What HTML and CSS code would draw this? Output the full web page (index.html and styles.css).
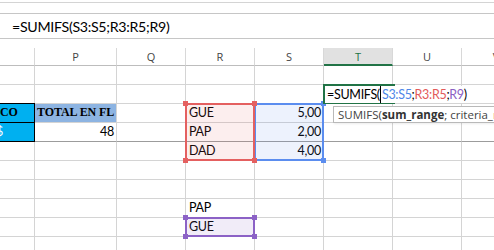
FILE: index.html
```html
<!DOCTYPE html>
<html>
  <head>
    <meta charset="UTF-8" />
    <title>SUMIFS</title>
    <link rel="stylesheet" href="styles.css">
  </head>
  <body>
    <div class="ribbon-edge"></div>
    <div class="formula-bar">
      <span class="formula-text">=SUMIFS(S3:S5;R3:R5;R9)</span>
    </div>

    <div class="sheet">
      <div class="grid">
        <!-- column headers -->
        <div class="hd"></div>
        <div class="hd">P</div>
        <div class="hd">Q</div>
        <div class="hd">R</div>
        <div class="hd">S</div>
        <div class="hd hd-active">T</div>
        <div class="hd">U</div>
        <div class="hd">V</div>

        <!-- row 1 -->
        <div class="c"></div><div class="c"></div><div class="c"></div><div class="c"></div>
        <div class="c"></div><div class="c"></div><div class="c"></div><div class="c"></div>

        <!-- row 2 -->
        <div class="c"></div><div class="c"></div><div class="c"></div><div class="c"></div>
        <div class="c"></div><div class="c"></div><div class="c"></div><div class="c"></div>

        <!-- row 3 -->
        <div class="c c-cyan c-head-o">CO</div>
        <div class="c c-total">TOTAL EN FL</div>
        <div class="c"></div>
        <div class="c">GUE</div>
        <div class="c num">5,00</div>
        <div class="c"></div><div class="c"></div><div class="c"></div>

        <!-- row 4 -->
        <div class="c c-cyan freeze-dark"><span class="cut">$</span></div>
        <div class="c num freeze">48</div>
        <div class="c freeze"></div>
        <div class="c freeze">PAP</div>
        <div class="c num freeze">2,00</div>
        <div class="c freeze"></div><div class="c freeze"></div><div class="c freeze"></div>

        <!-- row 5 -->
        <div class="c"></div><div class="c"></div><div class="c"></div>
        <div class="c">DAD</div>
        <div class="c num">4,00</div>
        <div class="c"></div><div class="c"></div><div class="c"></div>

        <!-- rows 6, 7 -->
        <div class="c"></div><div class="c"></div><div class="c"></div><div class="c"></div>
        <div class="c"></div><div class="c"></div><div class="c"></div><div class="c"></div>
        <div class="c"></div><div class="c"></div><div class="c"></div><div class="c"></div>
        <div class="c"></div><div class="c"></div><div class="c"></div><div class="c"></div>

        <!-- row 8 -->
        <div class="c"></div><div class="c"></div><div class="c"></div>
        <div class="c">PAP</div>
        <div class="c"></div><div class="c"></div><div class="c"></div><div class="c"></div>

        <!-- row 9 -->
        <div class="c"></div><div class="c"></div><div class="c"></div>
        <div class="c">GUE</div>
        <div class="c"></div><div class="c"></div><div class="c"></div><div class="c"></div>

        <!-- row 10 -->
        <div class="c"></div><div class="c"></div><div class="c"></div><div class="c"></div>
        <div class="c"></div><div class="c"></div><div class="c"></div><div class="c"></div>
      </div>

      <!-- highlights drawn over the cells, same tracks as the grid -->
      <div class="grid overlay">
        <div class="range range-blue"><i class="h tl"></i><i class="h tr"></i><i class="h bl"></i><i class="h br"></i></div>
        <div class="range range-red"><i class="h tl"></i><i class="h tr"></i><i class="h bl"></i><i class="h br"></i></div>
        <div class="range range-purple"><i class="h tl"></i><i class="h tr"></i><i class="h bl"></i><i class="h br"></i></div>
        <div class="active-cell">
          <div class="editor">=SUMIFS(<span class="caret"></span><span class="ref-blue">S3:S5</span>;<span class="ref-red">R3:R5</span>;<span class="ref-purple">R9</span>)</div>
        </div>
      </div>

      <div class="tooltip">SUMIFS(<b>sum_range</b>; criteria_range1; criteria1; ...)</div>
    </div>
  </body>
</html>
```

FILE: styles.css
```css
* {
  box-sizing: border-box;
  margin: 0;
  padding: 0;
}

body {
  width: 494px;
  height: 250px;
  overflow: hidden;
  background: #fff;
  font-family: 'Lato', 'Liberation Sans', sans-serif;
  color: #000;
}

.ribbon-edge {
  height: 3px;
  border-bottom: 1px solid #d4d4d4;
}

.formula-bar {
  margin-top: 10px;
  height: 26px;
  border-top: 1px solid #c6c6c6;
  border-bottom: 1px solid #c6c6c6;
  padding-left: 12px;
  display: flex;
  align-items: center;
  font-size: 14.2px;
  letter-spacing: -0.3px;
}

.sheet {
  position: relative;
  margin-top: 9px;
  width: 531px;
}

.grid {
  display: grid;
  grid-template-columns: 35px 82px repeat(6, 69px);
  grid-template-rows: 18px repeat(10, 19px);
  font-size: 12.5px;
  letter-spacing: -0.3px;
}

.overlay {
  position: absolute;
  top: 0;
  left: 0;
  right: 0;
  bottom: 0;
}

/* column headers */
.hd {
  border-right: 1px solid #d8d8d8;
  border-bottom: 1px solid #bdbdbd;
  font-family: 'Open Sans', 'Liberation Sans', sans-serif;
  font-size: 11px;
  letter-spacing: 0;
  color: #444;
  text-align: center;
  line-height: 17px;
}

.hd-active {
  background: #e1e1e1;
  color: #217346;
  border-bottom: 2px solid #217346;
}

/* cells */
.c {
  border-right: 1px solid #d4d4d4;
  border-bottom: 1px solid #d4d4d4;
  padding: 0 3px 2px;
  display: flex;
  align-items: flex-end;
  white-space: nowrap;
  overflow: hidden;
  line-height: 15px;
}

.num {
  justify-content: flex-end;
  padding-right: 2px;
}

.freeze {
  border-bottom-color: #9c9c9c;
}

.c-cyan {
  background: #00b0f0;
  border-right: 1px solid #000;
  border-bottom: 1px solid #000;
}

.freeze-dark {
  border-bottom-color: #000;
}

.c-head-o,
.c-total {
  font-family: 'Liberation Serif', serif;
  font-weight: bold;
  font-size: 12px;
  letter-spacing: -0.1px;
}

.c-head-o {
  border-top: 1px solid #000;
  margin-top: -1px;
  padding-left: 0;
}

.c-total {
  background: #8db4e2;
  padding-left: 2px;
}

.cut {
  color: #fff;
  margin-left: -7px;
}

/* cell in edit mode */
.active-cell {
  grid-column: 6;
  grid-row: 3;
  position: relative;
  margin: -1px -2px 0 -1px;
  border: 2px solid #217346;
  z-index: 3;
}

.editor {
  position: absolute;
  left: 0;
  top: 0;
  width: 137px;
  height: 17px;
  background: #fff;
  padding-left: 2px;
  line-height: 17px;
  font-size: 12.5px;
  white-space: nowrap;
}

.caret {
  display: inline-block;
  width: 1px;
  height: 17px;
  margin-right: 1px;
  background: #000;
  vertical-align: top;
}

.ref-blue {
  color: #4f86e8;
}

.ref-red {
  color: #e35a5a;
}

.ref-purple {
  color: #8b5fc4;
}

/* formula range frames */
.range {
  position: relative;
  margin: -1px 0 0 -1px;
  border: 2px solid;
}

.range-red {
  grid-column: 4;
  grid-row: 4 / 7;
  border-color: #e46060;
  background: rgba(228, 96, 96, 0.11);
}

.range-blue {
  grid-column: 5;
  grid-row: 4 / 7;
  border-color: #5b8def;
  background: rgba(91, 141, 239, 0.11);
}

.range-purple {
  grid-column: 4;
  grid-row: 10;
  border-color: #8c62c6;
  background: rgba(140, 98, 198, 0.12);
}

.h {
  position: absolute;
  width: 5px;
  height: 5px;
}

.range-red .h { background: #e46060; }
.range-blue .h { background: #5b8def; }
.range-purple .h { background: #8c62c6; }

.h.tl { left: -4px; top: -4px; }
.h.tr { right: -4px; top: -4px; }
.h.bl { left: -4px; bottom: -4px; }
.h.br { right: -4px; bottom: -4px; }

.tooltip {
  position: absolute;
  left: 333px;
  top: 58px;
  height: 17px;
  padding: 0 4px;
  border: 1px solid #b9b9b9;
  background: #fff;
  font-family: 'Open Sans', 'Liberation Sans', sans-serif;
  font-size: 11.5px;
  line-height: 15px;
  color: #444;
  white-space: nowrap;
  z-index: 4;
  box-shadow: 1px 1px 2px rgba(0, 0, 0, 0.08);
}

.tooltip b {
  color: #333;
}
```
